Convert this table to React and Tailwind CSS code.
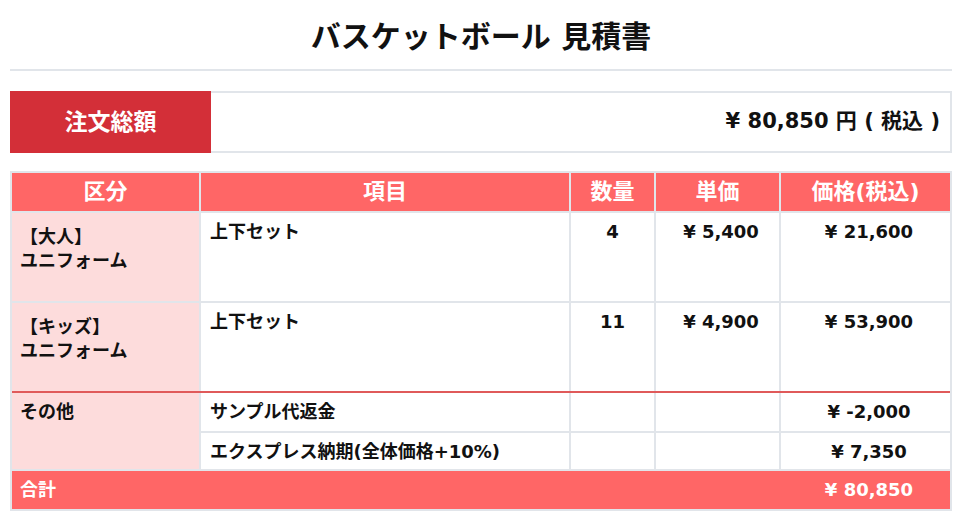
import React from 'react';

const font = { fontFamily: '"DejaVu Sans", "Noto Sans CJK JP", sans-serif' };

const rows = [
  { cat: ['【大人】', 'ユニフォーム'], item: '上下セット', qty: '4', unit: '¥ 5,400', price: '¥ 21,600' },
  { cat: ['【キッズ】', 'ユニフォーム'], item: '上下セット', qty: '11', unit: '¥ 4,900', price: '¥ 53,900' },
];

const others = [
  { item: 'サンプル代返金', price: '¥ -2,000' },
  { item: 'エクスプレス納期(全体価格+10%)', price: '¥ 7,350' },
];

function HeadCell({ children, className = '' }) {
  return (
    <div className={`flex items-center justify-center bg-[#ff6666] text-white text-[22px] ${className}`}>
      {children}
    </div>
  );
}

export default function App() {
  return (
    <div className="min-h-[523px] bg-white text-[#111] font-bold" style={font}>
      <div className="ml-[10px] w-[942px]">
        <h1 className="pt-[17px] text-center text-[30px] leading-[40px]">バスケットボール 見積書</h1>
        <div className="mt-[12px] h-[2px] bg-[#e1e5ea]" />

        {/* summary */}
        <div className="mt-[20px] flex h-[62px]">
          <div className="w-[201px] bg-[#d32f38] text-white text-[23px] flex items-center justify-center">注文総額</div>
          <div className="flex-1 border-2 border-l-0 border-[#e1e5ea] flex items-center justify-end pr-[10px] text-[21px]">
            ¥ 80,850 円 ( 税込 )
          </div>
        </div>

        {/* table */}
        <div className="mt-[18px] border-2 border-[#e1e5ea] text-[18px] leading-6">
          <div className="flex h-[38px]">
            <HeadCell className="w-[187px]">区分</HeadCell>
            <HeadCell className="w-[370px] border-l-2 border-[#e1e5ea]">項目</HeadCell>
            <HeadCell className="w-[85px] border-l-2 border-[#e1e5ea]">数量</HeadCell>
            <HeadCell className="w-[125px] border-l-2 border-[#e1e5ea]">単価</HeadCell>
            <HeadCell className="flex-1 border-l-2 border-[#e1e5ea]">価格(税込)</HeadCell>
          </div>

          {rows.map((r, i) => (
            <div key={i} className="flex h-[90px] border-t-2 border-[#e1e5ea]">
              <div className="w-[187px] bg-[#fddcdc] pl-[8px] pt-[12px]">
                {r.cat.map((c) => <div key={c}>{c}</div>)}
              </div>
              <div className="w-[370px] border-l-2 border-[#e1e5ea] pl-[9px] pt-[7px]">{r.item}</div>
              <div className="w-[85px] border-l-2 border-[#e1e5ea] pt-[7px] text-center">{r.qty}</div>
              <div className="w-[125px] border-l-2 border-[#e1e5ea] pt-[7px] pl-[7px] text-center">{r.unit}</div>
              <div className="flex-1 border-l-2 border-[#e1e5ea] pt-[7px] pl-[7px] text-center">{r.price}</div>
            </div>
          ))}

          <div className="flex border-t-2 border-[#e05a5a]">
            <div className="w-[187px] bg-[#fddcdc] pl-[8px] pt-[7px]">その他</div>
            <div className="flex-1">
              {others.map((o, i) => (
                <div key={i} className={`flex h-[38px] ${i ? 'border-t-2 border-[#e1e5ea]' : ''}`}>
                  <div className="w-[370px] border-l-2 border-[#e1e5ea] pl-[9px] pt-[7px]">{o.item}</div>
                  <div className="w-[85px] border-l-2 border-[#e1e5ea]" />
                  <div className="w-[125px] border-l-2 border-[#e1e5ea]" />
                  <div className="flex-1 border-l-2 border-[#e1e5ea] pt-[7px] pl-[7px] text-center">{o.price}</div>
                </div>
              ))}
            </div>
          </div>

          <div className="flex h-[40px] border-t-2 border-[#e1e5ea] bg-[#ff6666] text-white items-center">
            <div className="w-[769px] pl-[8px]">合計</div>
            <div className="flex-1 pl-[7px] text-center">¥ 80,850</div>
          </div>
        </div>
      </div>
    </div>
  );
}
